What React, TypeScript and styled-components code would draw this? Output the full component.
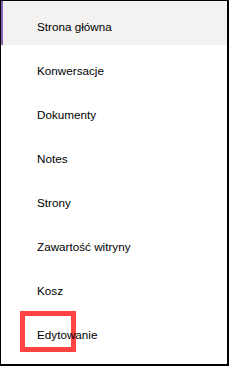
import React from "react";
import styled, { createGlobalStyle } from "styled-components";

const GlobalStyle = createGlobalStyle`
  html, body { margin: 0; padding: 0; background: #fff; }
  body { font-family: "Liberation Sans", Arial, sans-serif; }
`;

const items = [
  "Strona główna",
  "Konwersacje",
  "Dokumenty",
  "Notes",
  "Strony",
  "Zawartość witryny",
  "Kosz",
  "Edytowanie",
];

export default function App() {
  return (
    <>
      <GlobalStyle />
      <Frame>
        <NavList>
          {items.map((label, i) => (
            <NavItem key={label} $active={i === 0}>
              {label === "Edytowanie" && <Highlight />}
              <Label>{label}</Label>
            </NavItem>
          ))}
        </NavList>
      </Frame>
    </>
  );
}

const Frame = styled.div`
  box-sizing: border-box;
  width: 229px;
  height: 366px;
  border: 1px solid #000;
  border-right-width: 2px;
  border-bottom-width: 2px;
  background: #fff;
  overflow: hidden;
`;

const NavList = styled.nav`
  display: flex;
  flex-direction: column;
`;

const NavItem = styled.div<{ $active?: boolean }>`
  position: relative;
  box-sizing: border-box;
  height: 44px;
  display: flex;
  align-items: center;
  padding: 6px 0 0 36px;
  font-size: 11.7px;
  color: #000;
  background: ${(p) => (p.$active ? "#f3f2f1" : "transparent")};
  box-shadow: ${(p) => (p.$active ? "inset 2px 0 0 #8764b8" : "none")};
`;

const Label = styled.span`
  position: relative;
  z-index: 1;
`;

const Highlight = styled.div`
  position: absolute;
  left: 19px;
  top: 2px;
  width: 56px;
  height: 41px;
  box-sizing: border-box;
  border: 5px solid #ff4343;
`;
